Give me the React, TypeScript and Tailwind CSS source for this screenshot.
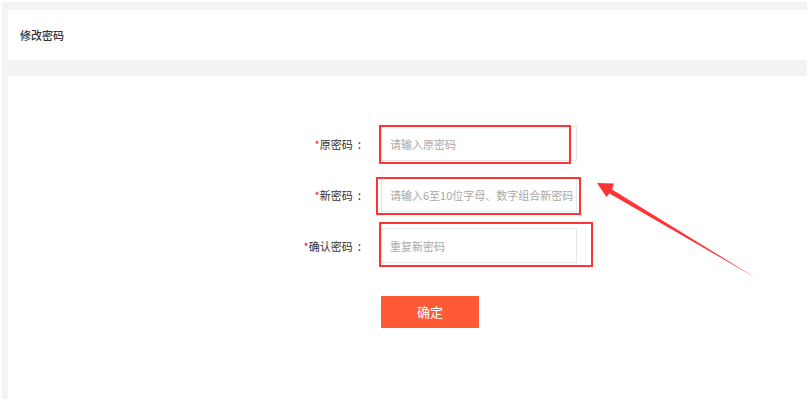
import React from "react";

const font = { fontFamily: '"Noto Sans CJK SC", "Noto Sans", sans-serif' };

function Row({ label, placeholder }: { label: string; placeholder: string }) {
  return (
    <div className="flex items-center">
      <div className="flex w-[80px] items-center justify-end text-[11px] leading-[14px] text-[#333]">
        <span className="text-[#f0141e]">*</span>
        <span>{label}</span>
        <span className="ml-[5px] mr-[1px] text-[12px]">:</span>
      </div>
      <div className="ml-[19px] flex h-[35px] w-[196px] items-center border border-[#e6e6e6] bg-white pl-[8px]">
        <span className="overflow-hidden whitespace-nowrap text-[11px] leading-[14px] text-[#a9a9a9]">{placeholder}</span>
      </div>
    </div>
  );
}

export default function App() {
  return (
    <div className="relative h-[401px] w-[809px] overflow-hidden bg-white p-[2px]" style={font}>
      <div className="flex h-full w-[805px] flex-col bg-[#f3f3f3] pl-[6px] pt-[8px]">
        <div className="flex h-[50px] items-center bg-white pl-[12px]">
          <span className="text-[11px] font-medium leading-[14px] text-[#333]">修改密码</span>
        </div>
        <div className="mt-[16px] flex flex-1 flex-col bg-white pl-[274px] pt-[50px]">
          <div className="flex flex-col gap-[16px]">
            <Row label="原密码" placeholder="请输入原密码" />
            <Row label="新密码" placeholder="请输入6至10位字母、数字组合新密码" />
            <Row label="确认密码" placeholder="重复新密码" />
          </div>
          <button className="ml-[99px] mt-[33px] h-[32px] w-[98px] bg-[#ff5a36] text-[13px] leading-[16px] text-white">
            确定
          </button>
        </div>
      </div>

      {/* screenshot annotations */}
      <div className="pointer-events-none absolute left-[379px] top-[125px] h-[39px] w-[192px] border-2 border-[#ff3333]" />
      <div className="pointer-events-none absolute left-[376px] top-[177px] h-[38px] w-[205px] border-2 border-[#ff3333]" />
      <div className="pointer-events-none absolute left-[379px] top-[222px] h-[45px] w-[214px] border-2 border-[#ff3333]" />
      <svg className="pointer-events-none absolute left-0 top-0" width="809" height="401" viewBox="0 0 809 401">
        <polygon points="597,183 614,183.5 612,189.6 756,278 609.5,193.6 606.5,197" fill="#ff3333" />
      </svg>
    </div>
  );
}
